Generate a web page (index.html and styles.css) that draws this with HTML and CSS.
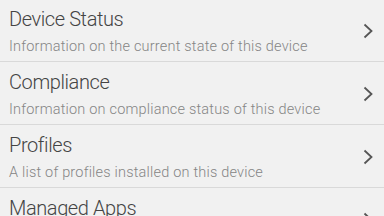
FILE: index.html
```html
<!DOCTYPE html>
<html lang="en">
  <head>
    <meta charset="UTF-8" />
    <meta name="viewport" content="width=device-width, initial-scale=1.0" />
    <title>Device</title>
    <link rel="stylesheet" href="styles.css">
  </head>
  <body>
    <ul class="menu-list">
      <li class="menu-item">
        <div class="menu-text">
          <div class="menu-title">Device Status</div>
          <div class="menu-desc">Information on the current state of this device</div>
        </div>
        <svg class="chevron" viewBox="0 0 10 16"><path d="M1.5 1.5 L8.5 8 L1.5 14.5" /></svg>
      </li>
      <li class="menu-item">
        <div class="menu-text">
          <div class="menu-title">Compliance</div>
          <div class="menu-desc">Information on compliance status of this device</div>
        </div>
        <svg class="chevron" viewBox="0 0 10 16"><path d="M1.5 1.5 L8.5 8 L1.5 14.5" /></svg>
      </li>
      <li class="menu-item">
        <div class="menu-text">
          <div class="menu-title">Profiles</div>
          <div class="menu-desc">A list of profiles installed on this device</div>
        </div>
        <svg class="chevron" viewBox="0 0 10 16"><path d="M1.5 1.5 L8.5 8 L1.5 14.5" /></svg>
      </li>
      <li class="menu-item">
        <div class="menu-text">
          <div class="menu-title">Managed Apps</div>
        </div>
        <svg class="chevron" viewBox="0 0 10 16"><path d="M1.5 1.5 L8.5 8 L1.5 14.5" /></svg>
      </li>
    </ul>
  </body>
</html>
```

FILE: styles.css
```css
* {
  box-sizing: border-box;
}
body {
  margin: 0;
  font-family: Roboto, "Liberation Sans", sans-serif;
  background-color: #f1f1f1;
  overflow: hidden;
}
.menu-list {
  list-style: none;
  margin: -1px 0 0 0;
  padding: 0;
}
.menu-item {
  display: flex;
  align-items: flex-start;
  height: 63px;
  padding: 7.5px 11px 0 9px;
  border-bottom: 1px solid #d9d9d9;
}
.menu-text {
  flex: 1;
}
.menu-title {
  font-size: 20px;
  font-weight: 300;
  letter-spacing: -0.4px;
  color: #444;
  line-height: 24px;
  margin-bottom: 7.5px;
}
.menu-desc {
  font-size: 14.5px;
  font-weight: 300;
  letter-spacing: 0.2px;
  color: #858585;
  line-height: 18px;
}
.chevron {
  width: 10px;
  height: 16px;
  margin-top: 16px;
  fill: none;
  stroke: #555;
  stroke-width: 1.8;
}
```
